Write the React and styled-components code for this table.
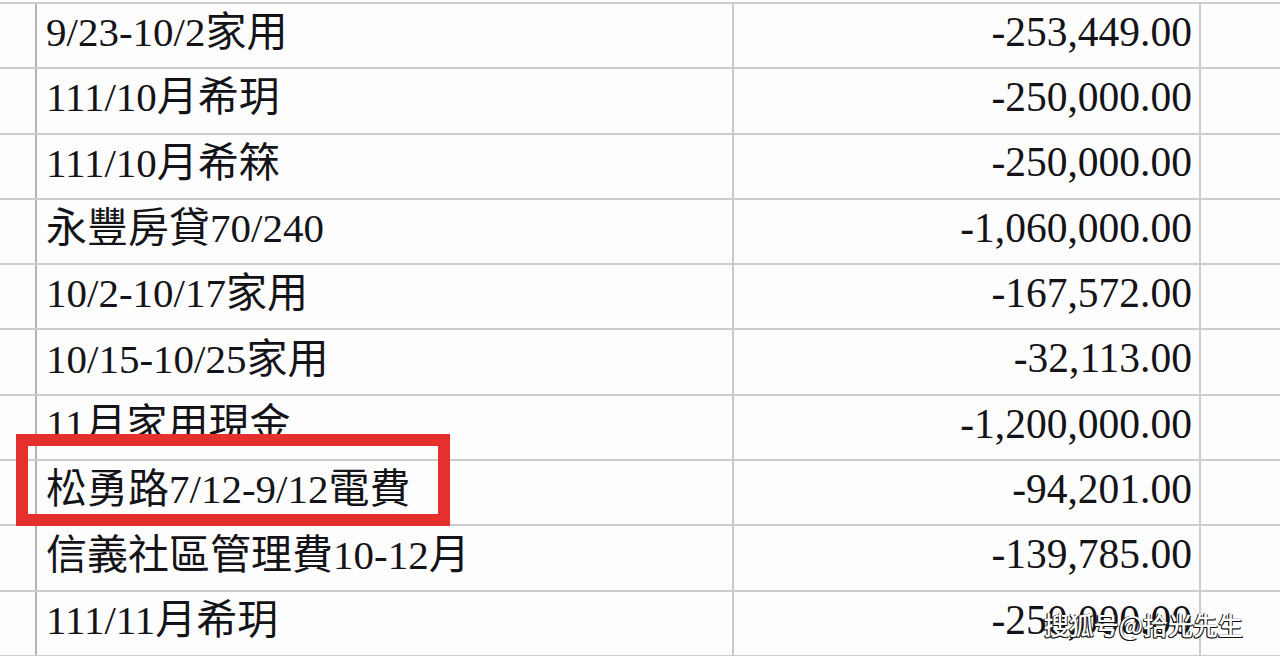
import React from "react";
import styled, { createGlobalStyle } from "styled-components";

const GlobalStyle = createGlobalStyle`
  html, body {
    margin: 0;
    padding: 0;
    background: #ffffff;
    overflow: hidden;
  }
`;

const Page = styled.div`
  position: relative;
  width: 1280px;
  height: 656px;
  overflow: hidden;
  background: #fdfdfd;
  padding-top: 2px;
  box-sizing: border-box;
`;

const Sheet = styled.div`
  display: flex;
  flex-direction: column;
`;

const Row = styled.div`
  display: grid;
  grid-template-columns: 35px 697px 467px 1fr;
  height: 65.3px;
  box-sizing: border-box;
  border-top: 2px solid #cdcdcd;
`;

const Cell = styled.div`
  display: flex;
  align-items: center;
  box-sizing: border-box;
  border-left: ${(p) => (p.$first ? "none" : `2px solid ${p.$dark ? "#b4b4b4" : "#cbcbcb"}`)};
  justify-content: ${(p) => (p.$right ? "flex-end" : "flex-start")};
  padding: ${(p) => (p.$right ? "0 7px 6px 0" : "0 0 6px 9px")};
  color: #141418;
  font-family: "Liberation Serif", "Noto Sans CJK TC", serif;
  font-size: ${(p) => (p.$right ? "41.5px" : "41px")};
  line-height: 1;
  white-space: nowrap;
  overflow: hidden;
`;

const Highlight = styled.div`
  position: absolute;
  left: 16px;
  top: 434px;
  width: 434px;
  height: 92px;
  box-sizing: border-box;
  border: 12px solid #e5302d;
`;

const Watermark = styled.div`
  position: absolute;
  right: 37px;
  bottom: 14px;
  color: #ffffff;
  font-family: "Noto Sans CJK SC", "Noto Sans", sans-serif;
  font-size: 25px;
  font-weight: 500;
  text-shadow: -1px 1px 0 #111, -1px 0 0 #111, 0 1px 0 #111, 1px 1px 0 #333;
`;

const rows = [
  ["9/23-10/2家用", "-253,449.00"],
  ["111/10月希玥", "-250,000.00"],
  ["111/10月希箖", "-250,000.00"],
  ["永豐房貸70/240", "-1,060,000.00"],
  ["10/2-10/17家用", "-167,572.00"],
  ["10/15-10/25家用", "-32,113.00"],
  ["11月家用現金", "-1,200,000.00"],
  ["松勇路7/12-9/12電費", "-94,201.00"],
  ["信義社區管理費10-12月", "-139,785.00"],
  ["111/11月希玥", "-250,000.00"],
  ["", ""],
];

export default function App() {
  return (
    <>
      <GlobalStyle />
      <Page>
        <Sheet>
          {rows.map(([label, amount], i) => (
            <Row key={i}>
              <Cell $first />
              <Cell $dark>{label}</Cell>
              <Cell $right>{amount}</Cell>
              <Cell />
            </Row>
          ))}
        </Sheet>
        <Highlight />
        <Watermark>搜狐号@拾光先生</Watermark>
      </Page>
    </>
  );
}
